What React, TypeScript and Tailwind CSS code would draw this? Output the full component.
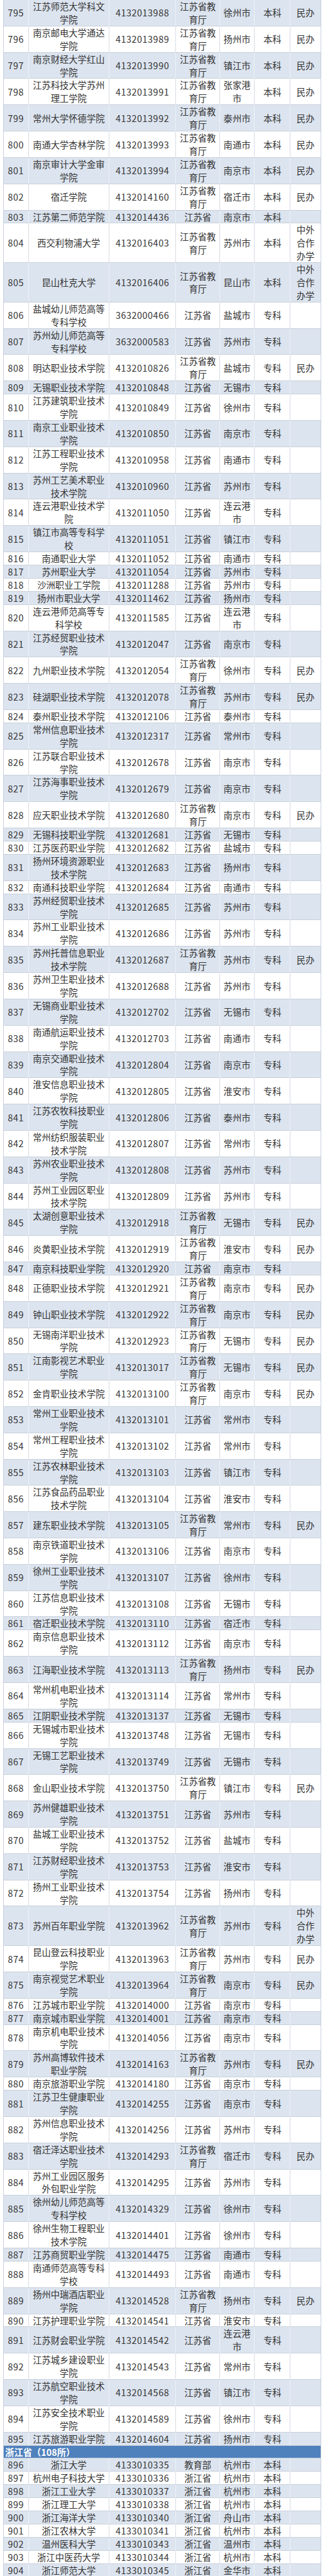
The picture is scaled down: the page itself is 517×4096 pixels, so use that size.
import React from 'react';

type Entry = [number, string, string, string, string, string?];

// 江苏省 rows: no, name, code, city, level, note
const jiangsu: Entry[] = [
    [795, '江苏师范大学科文学院', '4132013988', '徐州市', '本科', '民办'],
    [796, '南京邮电大学通达学院', '4132013989', '扬州市', '本科', '民办'],
    [797, '南京财经大学红山学院', '4132013990', '镇江市', '本科', '民办'],
    [798, '江苏科技大学苏州理工学院', '4132013991', '张家港市', '本科', '民办'],
    [799, '常州大学怀德学院', '4132013992', '泰州市', '本科', '民办'],
    [800, '南通大学杏林学院', '4132013993', '南通市', '本科', '民办'],
    [801, '南京审计大学金审学院', '4132013994', '南京市', '本科', '民办'],
    [802, '宿迁学院', '4132014160', '宿迁市', '本科', '民办'],
    [803, '江苏第二师范学院', '4132014436', '南京市', '本科'],
    [804, '西交利物浦大学', '4132016403', '苏州市', '本科', '中外合作办学'],
    [805, '昆山杜克大学', '4132016406', '昆山市', '本科', '中外合作办学'],
    [806, '盐城幼儿师范高等专科学校', '3632000466', '盐城市', '专科'],
    [807, '苏州幼儿师范高等专科学校', '3632000583', '苏州市', '专科'],
    [808, '明达职业技术学院', '4132010826', '盐城市', '专科', '民办'],
    [809, '无锡职业技术学院', '4132010848', '无锡市', '专科'],
    [810, '江苏建筑职业技术学院', '4132010849', '徐州市', '专科'],
    [811, '南京工业职业技术学院', '4132010850', '南京市', '专科'],
    [812, '江苏工程职业技术学院', '4132010958', '南通市', '专科'],
    [813, '苏州工艺美术职业技术学院', '4132010960', '苏州市', '专科'],
    [814, '连云港职业技术学院', '4132011050', '连云港市', '专科'],
    [815, '镇江市高等专科学校', '4132011051', '镇江市', '专科'],
    [816, '南通职业大学', '4132011052', '南通市', '专科'],
    [817, '苏州职业大学', '4132011054', '苏州市', '专科'],
    [818, '沙洲职业工学院', '4132011288', '苏州市', '专科'],
    [819, '扬州市职业大学', '4132011462', '扬州市', '专科'],
    [820, '连云港师范高等专科学校', '4132011585', '连云港市', '专科'],
    [821, '江苏经贸职业技术学院', '4132012047', '南京市', '专科'],
    [822, '九州职业技术学院', '4132012054', '徐州市', '专科', '民办'],
    [823, '硅湖职业技术学院', '4132012078', '苏州市', '专科', '民办'],
    [824, '泰州职业技术学院', '4132012106', '泰州市', '专科'],
    [825, '常州信息职业技术学院', '4132012317', '常州市', '专科'],
    [826, '江苏联合职业技术学院', '4132012678', '南京市', '专科'],
    [827, '江苏海事职业技术学院', '4132012679', '南京市', '专科'],
    [828, '应天职业技术学院', '4132012680', '南京市', '专科', '民办'],
    [829, '无锡科技职业学院', '4132012681', '无锡市', '专科'],
    [830, '江苏医药职业学院', '4132012682', '盐城市', '专科'],
    [831, '扬州环境资源职业技术学院', '4132012683', '扬州市', '专科'],
    [832, '南通科技职业学院', '4132012684', '南通市', '专科'],
    [833, '苏州经贸职业技术学院', '4132012685', '苏州市', '专科'],
    [834, '苏州工业职业技术学院', '4132012686', '苏州市', '专科'],
    [835, '苏州托普信息职业技术学院', '4132012687', '苏州市', '专科', '民办'],
    [836, '苏州卫生职业技术学院', '4132012688', '苏州市', '专科'],
    [837, '无锡商业职业技术学院', '4132012702', '无锡市', '专科'],
    [838, '南通航运职业技术学院', '4132012703', '南通市', '专科'],
    [839, '南京交通职业技术学院', '4132012804', '南京市', '专科'],
    [840, '淮安信息职业技术学院', '4132012805', '淮安市', '专科'],
    [841, '江苏农牧科技职业学院', '4132012806', '泰州市', '专科'],
    [842, '常州纺织服装职业技术学院', '4132012807', '常州市', '专科'],
    [843, '苏州农业职业技术学院', '4132012808', '苏州市', '专科'],
    [844, '苏州工业园区职业技术学院', '4132012809', '苏州市', '专科'],
    [845, '太湖创意职业技术学院', '4132012918', '无锡市', '专科', '民办'],
    [846, '炎黄职业技术学院', '4132012919', '淮安市', '专科', '民办'],
    [847, '南京科技职业学院', '4132012920', '南京市', '专科'],
    [848, '正德职业技术学院', '4132012921', '南京市', '专科', '民办'],
    [849, '钟山职业技术学院', '4132012922', '南京市', '专科', '民办'],
    [850, '无锡南洋职业技术学院', '4132012923', '无锡市', '专科', '民办'],
    [851, '江南影视艺术职业学院', '4132013017', '无锡市', '专科', '民办'],
    [852, '金肯职业技术学院', '4132013100', '南京市', '专科', '民办'],
    [853, '常州工业职业技术学院', '4132013101', '常州市', '专科'],
    [854, '常州工程职业技术学院', '4132013102', '常州市', '专科'],
    [855, '江苏农林职业技术学院', '4132013103', '镇江市', '专科'],
    [856, '江苏食品药品职业技术学院', '4132013104', '淮安市', '专科'],
    [857, '建东职业技术学院', '4132013105', '常州市', '专科', '民办'],
    [858, '南京铁道职业技术学院', '4132013106', '南京市', '专科'],
    [859, '徐州工业职业技术学院', '4132013107', '徐州市', '专科'],
    [860, '江苏信息职业技术学院', '4132013108', '无锡市', '专科'],
    [861, '宿迁职业技术学院', '4132013110', '宿迁市', '专科'],
    [862, '南京信息职业技术学院', '4132013112', '南京市', '专科'],
    [863, '江海职业技术学院', '4132013113', '扬州市', '专科', '民办'],
    [864, '常州机电职业技术学院', '4132013114', '常州市', '专科'],
    [865, '江阴职业技术学院', '4132013137', '无锡市', '专科'],
    [866, '无锡城市职业技术学院', '4132013748', '无锡市', '专科'],
    [867, '无锡工艺职业技术学院', '4132013749', '无锡市', '专科'],
    [868, '金山职业技术学院', '4132013750', '镇江市', '专科', '民办'],
    [869, '苏州健雄职业技术学院', '4132013751', '苏州市', '专科'],
    [870, '盐城工业职业技术学院', '4132013752', '盐城市', '专科'],
    [871, '江苏财经职业技术学院', '4132013753', '淮安市', '专科'],
    [872, '扬州工业职业技术学院', '4132013754', '扬州市', '专科'],
    [873, '苏州百年职业学院', '4132013962', '苏州市', '专科', '中外合作办学'],
    [874, '昆山登云科技职业学院', '4132013963', '苏州市', '专科', '民办'],
    [875, '南京视觉艺术职业学院', '4132013964', '南京市', '专科', '民办'],
    [876, '江苏城市职业学院', '4132014000', '南京市', '专科'],
    [877, '南京城市职业学院', '4132014001', '南京市', '专科'],
    [878, '南京机电职业技术学院', '4132014056', '南京市', '专科'],
    [879, '苏州高博软件技术职业学院', '4132014163', '苏州市', '专科', '民办'],
    [880, '南京旅游职业学院', '4132014180', '南京市', '专科'],
    [881, '江苏卫生健康职业学院', '4132014255', '南京市', '专科'],
    [882, '苏州信息职业技术学院', '4132014256', '苏州市', '专科'],
    [883, '宿迁泽达职业技术学院', '4132014293', '宿迁市', '专科', '民办'],
    [884, '苏州工业园区服务外包职业学院', '4132014295', '苏州市', '专科'],
    [885, '徐州幼儿师范高等专科学校', '4132014329', '徐州市', '专科'],
    [886, '徐州生物工程职业技术学院', '4132014401', '徐州市', '专科'],
    [887, '江苏商贸职业学院', '4132014475', '南通市', '专科'],
    [888, '南通师范高等专科学校', '4132014493', '南通市', '专科'],
    [889, '扬州中瑞酒店职业学院', '4132014528', '扬州市', '专科', '民办'],
    [890, '江苏护理职业学院', '4132014541', '淮安市', '专科'],
    [891, '江苏财会职业学院', '4132014542', '连云港市', '专科'],
    [892, '江苏城乡建设职业学院', '4132014543', '常州市', '专科'],
    [893, '江苏航空职业技术学院', '4132014568', '镇江市', '专科'],
    [894, '江苏安全技术职业学院', '4132014589', '徐州市', '专科'],
    [895, '江苏旅游职业学院', '4132014604', '扬州市', '专科'],
];

// 浙江省 rows: no, name, code, dept, city, level
const zhejiang: [number, string, string, string, string, string][] = [
    [896, '浙江大学', '4133010335', '教育部', '杭州市', '本科'],
    [897, '杭州电子科技大学', '4133010336', '浙江省', '杭州市', '本科'],
    [898, '浙江工业大学', '4133010337', '浙江省', '杭州市', '本科'],
    [899, '浙江理工大学', '4133010338', '浙江省', '杭州市', '本科'],
    [900, '浙江海洋大学', '4133010340', '浙江省', '舟山市', '本科'],
    [901, '浙江农林大学', '4133010341', '浙江省', '杭州市', '本科'],
    [902, '温州医科大学', '4133010343', '浙江省', '温州市', '本科'],
    [903, '浙江中医药大学', '4133010344', '浙江省', '杭州市', '本科'],
    [904, '浙江师范大学', '4133010345', '浙江省', '金华市', '本科'],
];

function chunk(text: string, size: number) {
    const out: string[] = [];
    for (let i = 0; i < text.length; i += size) out.push(text.slice(i, i + size));
    return out;
}

function Cell({ text, per, light, last, digits }: { text: string; per: number; light: boolean; last?: boolean; digits?: boolean }) {
    const border = last ? '' : light ? 'border-r border-[#eef2f7]' : 'border-r border-[#d6dce5]';
    return (
        <div className={`flex items-center justify-center text-center ${border} ${digits ? 'tracking-[0.6px]' : ''}`}>
            <div>
                {chunk(text, per).map((line, i) => (
                    <span key={i} className="block whitespace-nowrap">{line}</span>
                ))}
            </div>
        </div>
    );
}

function Row({ no, name, code, dept, city, level, note, light }: {
    no: number; name: string; code: string; dept: string; city: string; level: string; note: string; light: boolean;
}) {
    return (
        <div className={`grid grid-cols-[40.2px_127.9px_106.6px_69.7px_55px_57.4px_47.2px] shadow-[inset_0_-1px_0_#c9d0da] ${light ? 'bg-[#dce4ef]' : 'bg-white'}`}>
            <Cell text={String(no)} per={10} light={light} digits />
            <Cell text={name} per={8} light={light} />
            <Cell text={code} per={20} light={light} digits />
            <Cell text={dept} per={4} light={light} />
            <Cell text={city} per={3} light={light} />
            <Cell text={level} per={2} light={light} />
            <Cell text={note} per={2} light={light} last />
        </div>
    );
}

export default function App() {
    return (
        <div className="bg-white min-h-screen pl-[5.7px] font-['Noto_Sans_CJK_SC','Microsoft_YaHei',sans-serif]">
            <div className="w-[504.3px] text-[14.3px] leading-[20.9px] text-[#333333] shadow-[-1px_0_0_#c9d0da,1px_0_0_#c9d0da]">
                {jiangsu.map(([no, name, code, city, level, note]) => (
                    <Row
                        key={no}
                        no={no}
                        name={name}
                        code={code}
                        dept={note ? '江苏省教育厅' : '江苏省'}
                        city={city}
                        level={level}
                        note={note ?? ''}
                        light={no % 2 === 1}
                    />
                ))}

                {/* 浙江 section header */}
                <div className="bg-[#4f81bd] text-white font-bold pl-[2.5px] shadow-[inset_0_-1px_0_#c9d0da]">
                    浙江省（108所）
                </div>

                {zhejiang.map(([no, name, code, dept, city, level]) => (
                    <Row
                        key={no}
                        no={no}
                        name={name}
                        code={code}
                        dept={dept}
                        city={city}
                        level={level}
                        note=""
                        light={no % 2 === 0}
                    />
                ))}
            </div>
        </div>
    );
}
